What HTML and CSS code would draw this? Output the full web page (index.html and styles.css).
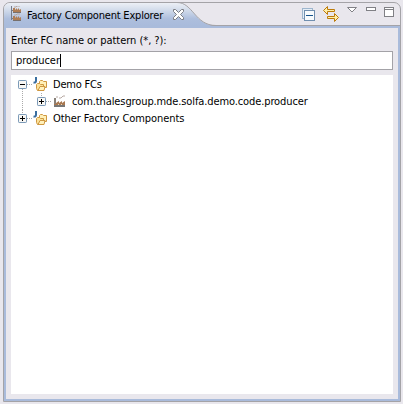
FILE: index.html
```
<!DOCTYPE html>
<html lang="en">
<head>
<meta charset="utf-8">
<title>Factory Component Explorer</title>
<link rel="stylesheet" href="styles.css">
</head>
<body>
<svg class="defs" width="0" height="0">
  <defs>
    <g id="factory">
      <path d="M1 12V5h2v4l3-2v2l3-2v2l3-2v5z" fill="#a87850"/>
      <path d="M1 11h11v2H1z" fill="#777"/>
      <path d="M1 4h2v6H1z" fill="#888078"/>
      <path d="M5 10h1v1H5zM8 10h1v1H8z" fill="#ead6b8"/>
      <path d="M3 3h2M6 4h2l2-2h2" stroke="#b8aaa4" fill="none"/>
    </g>
    <g id="folder">
      <path d="M6.500 4.500l1-1h2l1 1h3v6h-7z" fill="#fff0b8" stroke="#cf9841"/>
      <path d="M3.500 7.500l1-1h2l1 1h3v6h-6l-1-2z" fill="#fce29a" stroke="#cf9841"/>
      <path d="M5 13.500l2-4h5l-1 4z" fill="#fff1bc" stroke="#cf9841"/>
      <path d="M3 0v4q0 2-2.500 1.500" fill="none" stroke="#396d9f" stroke-width="2"/>
    </g>
    <g id="box">
      <rect x=".5" y=".5" width="8" height="8" rx=".7" fill="#f8f7f4" stroke="#7b9ab8"/>
      <path d="M2 4.500h5" stroke="#000"/>
    </g>
  </defs>
</svg>
<main class="view">
  <header class="bar">
    <svg class="tabshape" width="226" height="24" viewBox="0 0 226 24">
      <defs><linearGradient id="tabfill" x1="0" y1="0" x2="0" y2="1"><stop offset="0" stop-color="#f0f2f7"/><stop offset=".3" stop-color="#d5deec"/><stop offset=".7" stop-color="#adbedd"/><stop offset="1" stop-color="#a9bbdb"/></linearGradient></defs>
      <path d="M0 24V6Q1 0 6 0H174C190 1 192 23.500 213 24z" fill="url(#tabfill)"/>
      <path d="M174 .5C190 .5 192 23.500 213 23.500" fill="none" stroke="#a4a3a7"/>
    </svg>
    <div class="tab">
      <svg class="tabicon" width="12" height="16" viewBox="0 0 12 16">
        <path d="M1.500 0v14M1 4.500h3M1 12.500h3" fill="none" stroke="#777b88"/>
        <path d="M3 7V2h2v2l2-2v2l2-2v2l2-1v4zM3 15v-5h2v2l2-2v2l2-2v2l2-1v4z" fill="#b07e56"/>
        <path d="M3 6h8v1H3zM3 14h8v1H3z" fill="#77706d"/>
        <path d="M4 1h2l1-1h3M4 9h2l1-1h3" fill="none" stroke="#b5a49d"/>
      </svg>
      <span class="title">Factory Component Explorer</span>
      <svg class="close" width="11" height="11" viewBox="0 0 11 11"><path d="M.5.500h2l3 3 3-3h2v2l-3 3 3 3v2h-2l-3-3-3 3h-2v-2l3-3-3-3z" fill="#fff" stroke="#7c7e85"/></svg>
    </div>
    <svg class="tools" width="102" height="18" viewBox="0 0 102 18" shape-rendering="crispEdges">
      <rect x=".5" y="2.500" width="10" height="10" fill="#e5edf6" stroke="#9eb6cd"/>
      <rect x="2.500" y="4.500" width="10" height="10" fill="#f8fbfd" stroke="#718faf"/>
      <path d="M4 9.500h7" stroke="#18548c" stroke-width="1"/>
      <g fill="#fff0a8" stroke="#bd7b0a"><path d="M21.500 4.500l4-4v3h7v2h-7v3zM36.500 11.500l-4-4v3h-7v2h7v3z" shape-rendering="auto"/></g>
      <path d="M45.500 1.500h9L50 6z" fill="#fff" stroke="#808085" shape-rendering="auto"/>
      <rect x="64.500" y="1.500" width="9" height="3" fill="#fff" stroke="#808085"/>
      <rect x="82.500" y="1.500" width="9" height="9" fill="#fff" stroke="#808085"/>
      <path d="M82 3.500h10" stroke="#808085"/>
    </svg>
  </header>
  <section class="body">
    <label class="prompt" for="pattern"><span>Enter FC name or pattern (*, ?):</span></label>
    <div class="field" id="pattern"><span>producer</span><i class="caret"></i></div>
    <div class="tree">
      <div class="row">
        <svg width="34" height="17" viewBox="0 0 34 17"><path d="M4.500 13v4M9 8.500h5" stroke="#aaa" stroke-dasharray="1 1"/><use href="#box" y="4"/><use href="#folder" x="15" y="1"/></svg>
        <span class="t1">Demo FCs</span>
      </div>
      <div class="row">
        <svg width="53" height="17" viewBox="0 0 53 17"><path d="M4.500 0v17M23.500 0v4M28 8.500h5" stroke="#aaa" stroke-dasharray="1 1"/><use href="#box" x="19" y="4"/><path d="M23.500 6v5" stroke="#000"/><use href="#factory" x="35" y="1"/></svg>
        <span class="t2">com.thalesgroup.mde.solfa.demo.code.producer</span>
      </div>
      <div class="row">
        <svg width="34" height="17" viewBox="0 0 34 17"><path d="M4.500 0v4M9 8.500h5" stroke="#aaa" stroke-dasharray="1 1"/><use href="#box" y="4"/><path d="M4.500 6v5" stroke="#000"/><use href="#folder" x="15" y="1"/></svg>
        <span class="t3">Other Factory Components</span>
      </div>
    </div>
  </section>
</main>
</body>
</html>
```
FILE: styles.css
```
* { box-sizing: border-box; }
body {
  margin: 0;
  padding: 2px 2px 2px 3px;
  height: 404px;
  overflow: hidden;
  background: #e9e7ed;
  color: #000;
  font: 11px/17px "DejaVu Sans Condensed", "DejaVu Sans", sans-serif;
  font-stretch: condensed;
  white-space: nowrap;
}
svg { display: block; flex: none; }
.defs { position: absolute; }
.view {
  display: flex;
  flex-direction: column;
  height: 400px;
  border: 1px solid #a4a3a7;
  border-radius: 7px 7px 0 0;
  overflow: hidden;
}
.bar {
  position: relative;
  display: flex;
  flex: none;
  justify-content: space-between;
  height: 25px;
  border-bottom: 2px solid #a9bbdb;
  box-shadow: inset 0 -3px #a4a3a7;
  background: linear-gradient(#a4a3a7, #a4a3a7) 0 22px / 100% 1px no-repeat;
  box-shadow: none;
}
.tabshape { position: absolute; left: -1px; top: -1px; }
.tab { position: relative; display: flex; padding: 3px 0 0 6px; }
.tabicon { margin: 0 5px 0 0; }
.title { width: 138px; letter-spacing: -.19px; margin-top: 1px; }
.close { margin: 3px 0 0 8px; }
.tools { position: relative; margin: 3px -4px 0 0; }
.body {
  flex: 1;
  display: flex;
  flex-direction: column;
  padding: 4px 5px 5px;
  border: solid #a9bbdb;
  border-width: 0 2px 2px;
}
.prompt { height: 19px; line-height: 17px; letter-spacing: -.04px; }
.field {
  display: flex;
  align-items: center;
  flex: none;
  height: 19px;
  padding-left: 4px;
  border: 1px solid #a3a2a7;
  background: #fff;
  letter-spacing: -.05px;
}
.caret { width: 1px; height: 13px; background: #000; }
.tree { flex: 1; margin-top: 5px; padding: 1px 0 0 7px; background: #fff; }
.row { display: flex; height: 17px; }
.row span { margin-left: 1px; }
.t1 { letter-spacing: -.2px; }
.t2 { letter-spacing: -.11px; }
.t3 { letter-spacing: -.07px; }
```
